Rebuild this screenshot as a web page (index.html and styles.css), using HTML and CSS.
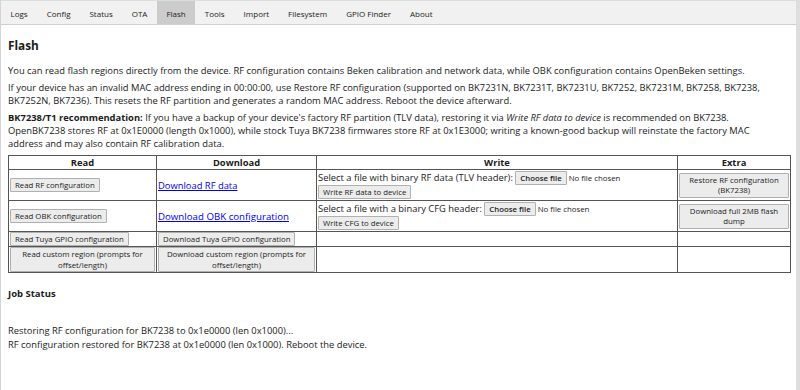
FILE: index.html
```html
<!DOCTYPE html>
<html>
<head>
<meta charset="utf-8">
<link rel="stylesheet" href="styles.css">
</head>
<body>
<div class="page">
  <nav class="tabs">
    <button class="tab">Logs</button>
    <button class="tab">Config</button>
    <button class="tab">Status</button>
    <button class="tab">OTA</button>
    <button class="tab active">Flash</button>
    <button class="tab">Tools</button>
    <button class="tab">Import</button>
    <button class="tab">Filesystem</button>
    <button class="tab">GPIO Finder</button>
    <button class="tab">About</button>
  </nav>
  <main class="content">
    <h2 class="title">Flash</h2>
    <p class="para">You can read flash regions directly from the device. RF configuration contains Beken calibration and network data, while OBK configuration contains OpenBeken settings.</p>
    <p class="para">If your device has an invalid MAC address ending in 00:00:00, use Restore RF configuration (supported on BK7231N, BK7231T, BK7231U, BK7252, BK7231M, BK7258, BK7238, BK7252N, BK7236). This resets the RF partition and generates a random MAC address. Reboot the device afterward.</p>
    <p class="para"><b>BK7238/T1 recommendation:</b> If you have a backup of your device's factory RF partition (TLV data), restoring it via <i>Write RF data to device</i> is recommended on BK7238. OpenBK7238 stores RF at 0x1E0000 (length 0x1000), while stock Tuya BK7238 firmwares store RF at 0x1E3000; writing a known-good backup will reinstate the factory MAC address and may also contain RF calibration data.</p>
    <table class="grid">
      <colgroup>
        <col class="c-read">
        <col class="c-down">
        <col class="c-write">
        <col class="c-extra">
      </colgroup>
      <thead>
        <tr><th>Read</th><th>Download</th><th>Write</th><th>Extra</th></tr>
      </thead>
      <tbody>
        <tr class="r1">
          <td><button class="btn">Read RF configuration</button></td>
          <td><a href="#" class="link">Download RF data</a></td>
          <td class="wcell">Select a file with binary RF data (TLV header): <span class="file"><button class="btn fbtn">Choose file</button> No file chosen</span><br><button class="btn">Write RF data to device</button></td>
          <td><button class="btn full">Restore RF configuration (BK7238)</button></td>
        </tr>
        <tr class="r2">
          <td><button class="btn">Read OBK configuration</button></td>
          <td><a href="#" class="link big">Download OBK configuration</a></td>
          <td class="wcell">Select a file with a binary CFG header: <span class="file"><button class="btn fbtn">Choose file</button> No file chosen</span><br><button class="btn">Write CFG to device</button></td>
          <td><button class="btn full">Download full 2MB flash dump</button></td>
        </tr>
        <tr class="r3">
          <td><button class="btn">Read Tuya GPIO configuration</button></td>
          <td><button class="btn">Download Tuya GPIO configuration</button></td>
          <td></td>
          <td></td>
        </tr>
        <tr class="r4">
          <td><button class="btn full">Read custom region (prompts for offset/length)</button></td>
          <td><button class="btn full">Download custom region (prompts for offset/length)</button></td>
          <td></td>
          <td></td>
        </tr>
      </tbody>
    </table>
    <h3 class="sub">Job Status</h3>
    <div class="log">
      <div>Restoring RF configuration for BK7238 to 0x1e0000 (len 0x1000)...</div>
      <div>RF configuration restored for BK7238 at 0x1e0000 (len 0x1000). Reboot the device.</div>
    </div>
  </main>
</div>
</body>
</html>
```

FILE: styles.css
```css
html, body {
  margin: 0;
  padding: 0;
  background: #fff;
}
body {
  font-family: "Open Sans", "Noto Sans", sans-serif;
  color: #1b1b1b;
  font-size: 9.4px;
}
.page {
  width: 800px;
  height: 390px;
  border-left: 1px solid #d4d4d4;
  border-right: 4px solid #dedede;
  box-sizing: border-box;
  overflow: hidden;
}
.tabs {
  display: flex;
  height: 25px;
  box-sizing: border-box;
  background: #f1f1f1;
  border-top: 1px solid #dddddd;
  border-bottom: 1px solid #cfcfcf;
}
.tab {
  font-family: inherit;
  font-size: 8px;
  color: #222;
  background: transparent;
  border: 0;
  margin: 0;
  padding: 1px 9.5px 0;
  height: 100%;
}
.tab.active {
  background: #cccccc;
}
.content {
  padding: 0 3px 0 7px;
}
.title {
  font-size: 11.8px;
  font-weight: bold;
  margin: 12px 0 10.5px;
  line-height: 16px;
}
.para {
  margin: 0 0 4px;
  line-height: 13px;
  max-width: 776px;
}
.grid {
  margin-top: 5.5px;
  width: 782px;
  border-collapse: collapse;
  table-layout: fixed;
  border: 1px solid #444;
}
.c-read { width: 148px; }
.c-down { width: 160px; }
.c-write { width: 361px; }
.c-extra { width: 113px; }
.grid th, .grid td {
  border: 1px solid #555;
  padding: 0 1px;
}
.grid th {
  font-weight: bold;
  height: 13px;
  line-height: 13px;
}
.grid td {
  vertical-align: middle;
}
.r1 td { height: 30px; }
.r2 td { height: 30px; }
.r3 td { height: 14px; }
.r4 td { height: 25px; }
.btn {
  font-family: inherit;
  font-size: 7.8px;
  color: #222;
  background: #ececec;
  border: 1px solid #b0b0b0;
  border-radius: 1px;
  padding: 1px 4px;
  margin: 0;
  line-height: 10px;
}
.btn.full {
  width: 100%;
  padding: 1px 6px;
  line-height: 10.5px;
}
.grid td .btn.full { display: block; }
.fbtn {
  font-weight: 600;
  color: #222;
}
.link {
  color: #0000ee;
  text-decoration: underline;
}
.link.big {
  font-size: 9.7px;
}
.wcell {
  line-height: 14px;
}
.file {
  font-size: 7.8px;
}
.sub {
  font-size: 9.5px;
  font-weight: bold;
  margin: 14px 0 0;
  line-height: 13px;
}
.log {
  margin-top: 24px;
  line-height: 13.6px;
}
```
